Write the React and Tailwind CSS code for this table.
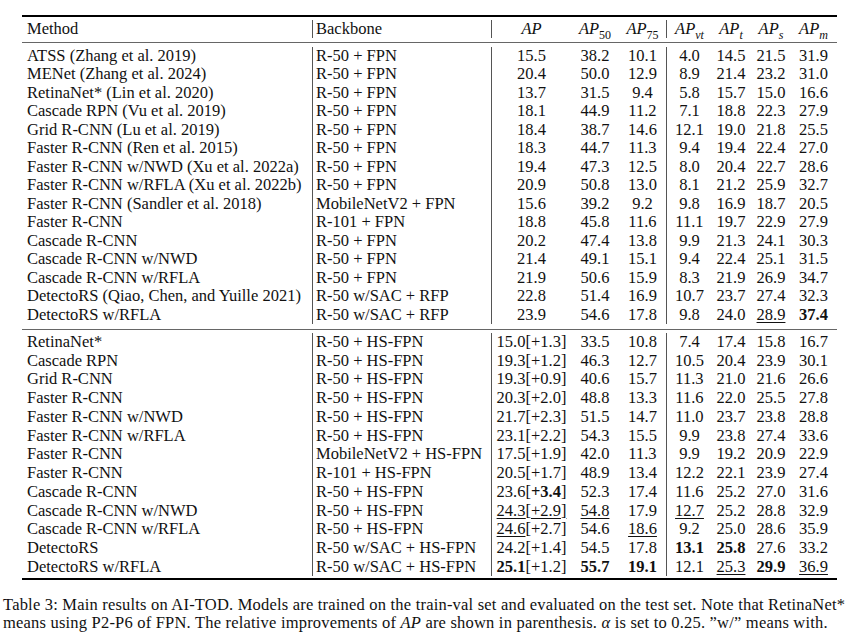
import React from 'react';

const top = [
  ['ATSS (Zhang et al. 2019)', 'R-50 + FPN', ['15.5', '38.2', '10.1', '4.0', '14.5', '21.5', '31.9']],
  ['MENet (Zhang et al. 2024)', 'R-50 + FPN', ['20.4', '50.0', '12.9', '8.9', '21.4', '23.2', '31.0']],
  ['RetinaNet* (Lin et al. 2020)', 'R-50 + FPN', ['13.7', '31.5', '9.4', '5.8', '15.7', '15.0', '16.6']],
  ['Cascade RPN (Vu et al. 2019)', 'R-50 + FPN', ['18.1', '44.9', '11.2', '7.1', '18.8', '22.3', '27.9']],
  ['Grid R-CNN (Lu et al. 2019)', 'R-50 + FPN', ['18.4', '38.7', '14.6', '12.1', '19.0', '21.8', '25.5']],
  ['Faster R-CNN (Ren et al. 2015)', 'R-50 + FPN', ['18.3', '44.7', '11.3', '9.4', '19.4', '22.4', '27.0']],
  ['Faster R-CNN w/NWD (Xu et al. 2022a)', 'R-50 + FPN', ['19.4', '47.3', '12.5', '8.0', '20.4', '22.7', '28.6']],
  ['Faster R-CNN w/RFLA (Xu et al. 2022b)', 'R-50 + FPN', ['20.9', '50.8', '13.0', '8.1', '21.2', '25.9', '32.7']],
  ['Faster R-CNN (Sandler et al. 2018)', 'MobileNetV2 + FPN', ['15.6', '39.2', '9.2', '9.8', '16.9', '18.7', '20.5']],
  ['Faster R-CNN', 'R-101 + FPN', ['18.8', '45.8', '11.6', '11.1', '19.7', '22.9', '27.9']],
  ['Cascade R-CNN', 'R-50 + FPN', ['20.2', '47.4', '13.8', '9.9', '21.3', '24.1', '30.3']],
  ['Cascade R-CNN w/NWD', 'R-50 + FPN', ['21.4', '49.1', '15.1', '9.4', '22.4', '25.1', '31.5']],
  ['Cascade R-CNN w/RFLA', 'R-50 + FPN', ['21.9', '50.6', '15.9', '8.3', '21.9', '26.9', '34.7']],
  ['DetectoRS (Qiao, Chen, and Yuille 2021)', 'R-50 w/SAC + RFP', ['22.8', '51.4', '16.9', '10.7', '23.7', '27.4', '32.3']],
  ['DetectoRS w/RFLA', 'R-50 w/SAC + RFP', ['23.9', '54.6', '17.8', '9.8', '24.0', '_28.9', '*37.4']],
];

// prefix "_" = underline, "*" = bold
const bottom = [
  ['RetinaNet*', 'R-50 + HS-FPN', ['15.0|+1.3', '33.5', '10.8', '7.4', '17.4', '15.8', '16.7']],
  ['Cascade RPN', 'R-50 + HS-FPN', ['19.3|+1.2', '46.3', '12.7', '10.5', '20.4', '23.9', '30.1']],
  ['Grid R-CNN', 'R-50 + HS-FPN', ['19.3|+0.9', '40.6', '15.7', '11.3', '21.0', '21.6', '26.6']],
  ['Faster R-CNN', 'R-50 + HS-FPN', ['20.3|+2.0', '48.8', '13.3', '11.6', '22.0', '25.5', '27.8']],
  ['Faster R-CNN w/NWD', 'R-50 + HS-FPN', ['21.7|+2.3', '51.5', '14.7', '11.0', '23.7', '23.8', '28.8']],
  ['Faster R-CNN w/RFLA', 'R-50 + HS-FPN', ['23.1|+2.2', '54.3', '15.5', '9.9', '23.8', '27.4', '33.6']],
  ['Faster R-CNN', 'MobileNetV2 + HS-FPN', ['17.5|+1.9', '42.0', '11.3', '9.9', '19.2', '20.9', '22.9']],
  ['Faster R-CNN', 'R-101 + HS-FPN', ['20.5|+1.7', '48.9', '13.4', '12.2', '22.1', '23.9', '27.4']],
  ['Cascade R-CNN', 'R-50 + HS-FPN', ['23.6|*+3.4', '52.3', '17.4', '11.6', '25.2', '27.0', '31.6']],
  ['Cascade R-CNN w/NWD', 'R-50 + HS-FPN', ['_24.3|_+2.9', '_54.8', '17.9', '_12.7', '25.2', '28.8', '32.9']],
  ['Cascade R-CNN w/RFLA', 'R-50 + HS-FPN', ['_24.6|+2.7', '54.6', '_18.6', '9.2', '25.0', '28.6', '35.9']],
  ['DetectoRS', 'R-50 w/SAC + HS-FPN', ['24.2|+1.4', '54.5', '17.8', '*13.1', '*25.8', '27.6', '33.2']],
  ['DetectoRS w/RFLA', 'R-50 w/SAC + HS-FPN', ['*25.1|+1.2', '*55.7', '*19.1', '12.1', '_25.3', '*29.9', '_36.9']],
];

const widths = ['w-[80px]', 'w-[48px]', 'w-[47px]', 'w-[46px]', 'w-[38px]', 'w-[42px]', 'w-[43px]'];
const leftLine = [true, false, false, true, false, false, false];

const Fmt = ({ v }) => {
  if (v.startsWith('*')) return <b>{v.slice(1)}</b>;
  if (v.startsWith('_')) return <span className="underline decoration-1 underline-offset-2">{v.slice(1)}</span>;
  return v;
};

const Val = ({ v }) => {
  if (v.includes('|')) {
    const [a, b] = v.split('|');
    const whole = a.startsWith('_') && b.startsWith('_');
    if (whole) {
      return (
        <span className="underline decoration-1 underline-offset-2">
          {a.slice(1)}[{b.slice(1)}]
        </span>
      );
    }
    return (
      <>
        <Fmt v={a} />[<Fmt v={b} />]
      </>
    );
  }
  return <Fmt v={v} />;
};

const Row = ({ r, h }) => (
  <div className={`flex ${h}`}>
    <div className="w-[290px] pl-[5px] flex items-center whitespace-nowrap">{r[0]}</div>
    <div className="w-[179px] pl-[3px] border-l border-[#555] flex items-center whitespace-nowrap">{r[1]}</div>
    {r[2].map((v, i) => (
      <div
        key={i}
        className={`${widths[i]} flex items-center justify-center whitespace-nowrap ${leftLine[i] ? 'border-l border-[#555]' : ''}`}
      >
        <Val v={v} />
      </div>
    ))}
  </div>
);

const M = ({ sub, it = true }) => (
  <span className="italic">
    AP<sub className={`text-[12px] ${it ? 'italic' : 'not-italic'} align-[-2px]`}>{sub}</sub>
  </span>
);

const heads = [
  <span className="italic">AP</span>,
  <M sub="50" it={false} />,
  <M sub="75" it={false} />,
  <M sub="vt" />,
  <M sub="t" />,
  <M sub="s" />,
  <M sub="m" />,
];

export default function App() {
  return (
    <div className="w-[861px] h-[635px] bg-white text-[#111] font-['Liberation_Serif',serif] text-[16.5px] leading-none">
      <div className="pt-[15px] pl-[22px] w-[837px]">
        <div className="h-[1.7px] bg-black" />
        <div className="py-[3.5px]">
          <div className="flex h-[18px]">
            <div className="w-[290px] pl-[5px] flex items-center">Method</div>
            <div className="w-[179px] pl-[3px] border-l border-[#555] flex items-center">Backbone</div>
            {heads.map((hd, i) => (
              <div
                key={i}
                className={`${widths[i]} flex items-center justify-center whitespace-nowrap ${leftLine[i] ? 'border-l border-[#555]' : ''}`}
              >
                {hd}
              </div>
            ))}
          </div>
        </div>
        <div className="h-[1.5px] bg-[#666]" />
        <div className="pt-[3.5px] pb-[4.5px]">
          {top.map((r, i) => (
            <Row key={i} r={r} h="h-[18.5px]" />
          ))}
        </div>
        <div className="h-[1.5px] bg-[#666]" />
        <div className="pt-[2.5px] pb-[1.5px]">
          {bottom.map((r, i) => (
            <Row key={i} r={r} h="h-[18.75px]" />
          ))}
        </div>
        <div className="h-[2px] bg-black" />
      </div>
      <div className="mt-[16px] pl-[3px] font-['Liberation_Serif',serif] text-[16.5px] tracking-[0.2px] leading-[18px] text-[#111]">
        <p className="whitespace-nowrap">
          Table 3: Main results on AI-TOD. Models are trained on the train-val set and evaluated on the test set. Note that RetinaNet*
        </p>
        <p className="whitespace-nowrap">
          means using P2-P6 of FPN. The relative improvements of <span className="italic">AP</span> are shown in parenthesis.{' '}
          <span className="italic">α</span> is set to 0.25. ”w/” means with.
        </p>
      </div>
    </div>
  );
}
